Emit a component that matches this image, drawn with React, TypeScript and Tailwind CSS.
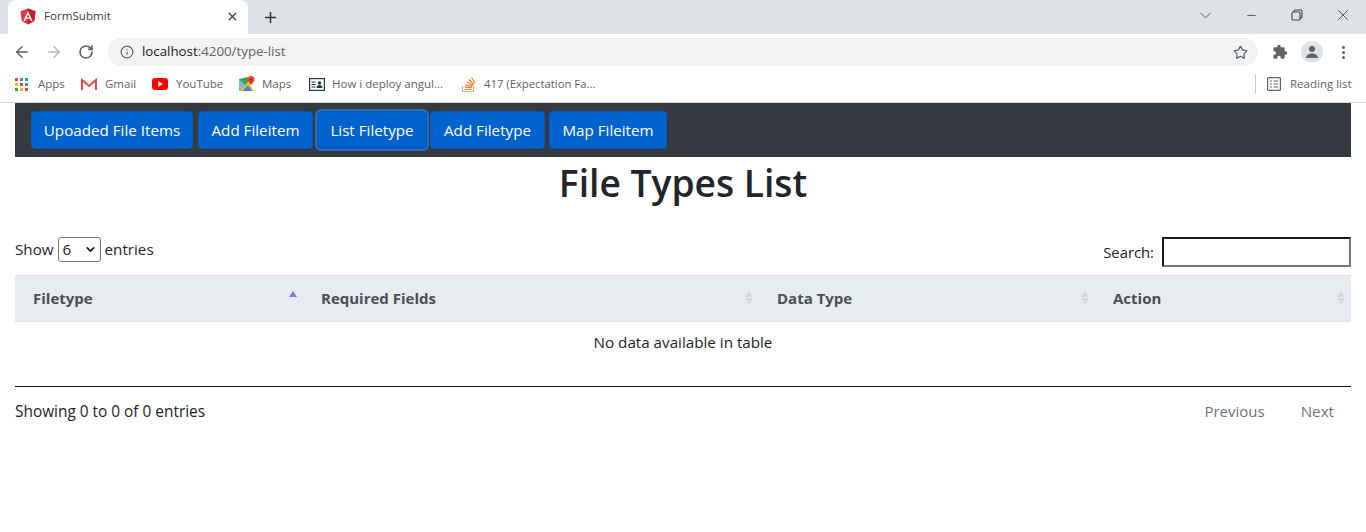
import { ArrowLeft, ArrowRight, ChevronDown, Info, Minus, Plus, RotateCw, Star, X } from 'lucide-react';

const ui = "font-['Open_Sans','Noto_Sans',sans-serif]";

export default function App() {
  return (
    <div className={`h-[532px] w-[1366px] overflow-hidden bg-white ${ui}`}>
      <TabBar />
      <Toolbar />
      <Bookmarks />
      <div className="px-[15px]">
        <NavBar />
        <h1 className="h-[52px] text-center text-[37.2px] leading-[52px] font-semibold text-[#212529]">File Types List</h1>
        <TableControls />
        <FileTable />
        <TableFooter />
      </div>
    </div>
  );
}

function TabBar() {
  return (
    <div className="flex h-[34px] bg-[#dee1e6] pl-2">
      <div className="flex h-[34px] w-[240px] items-center rounded-t-lg bg-white pr-[9px] pb-[2px] pl-3">
        <AngularLogo />
        <span className="ml-2 flex-1 text-[11.6px] text-[#3c4043]">FormSubmit</span>
        <X size={13} strokeWidth={2.6} className="text-[#45484c]" />
      </div>
      <Plus size={17} strokeWidth={2.2} className="mt-[9px] ml-[14px] text-[#35373a]" />
      <div className="ml-auto flex h-[30px] items-center text-[#3c4043]">
        <WindowButton><ChevronDown size={19} strokeWidth={1.1} /></WindowButton>
        <WindowButton><Minus size={13} strokeWidth={1.5} /></WindowButton>
        <WindowButton><RestoreIcon /></WindowButton>
        <WindowButton><X size={18} strokeWidth={1.1} /></WindowButton>
      </div>
    </div>
  );
}

function WindowButton({ children }: { children: React.ReactNode }) {
  return <div className="flex h-[30px] w-[46px] items-center justify-center">{children}</div>;
}

function Toolbar() {
  return (
    <div className="flex h-[34px] items-center bg-white pt-[2px] pl-[13px]">
      <ArrowLeft size={18} strokeWidth={2} className="text-[#5f6368]" />
      <ArrowRight size={18} strokeWidth={2} className="ml-[14px] text-[#b4b6b9]" />
      <RotateCw size={16} strokeWidth={2.4} className="ml-[15px] text-[#5f6368]" />
      <div className="ml-[14px] flex h-7 w-[1150px] items-center rounded-full bg-[#f1f3f4] pr-[10px] pl-[12px]">
        <Info size={14} strokeWidth={2} className="text-[#5f6368]" />
        <span className="ml-[8px] flex-1 text-[13.3px] text-[#5f6368]">
          <span className="text-[#202124]">localhost</span>:4200/type-list
        </span>
        <Star size={15} strokeWidth={2} className="text-[#5f6368]" />
      </div>
      <PuzzleIcon />
      <div className="ml-[13px] flex h-[22px] w-[22px] items-center justify-center rounded-full bg-[#dee1e6]">
        <AvatarIcon />
      </div>
      <div className="ml-[19px] flex flex-col gap-[2px]">
        <span className="h-[3px] w-[3px] rounded-full bg-[#5f6368]" />
        <span className="h-[3px] w-[3px] rounded-full bg-[#5f6368]" />
        <span className="h-[3px] w-[3px] rounded-full bg-[#5f6368]" />
      </div>
    </div>
  );
}

function Bookmarks() {
  return (
    <div className="flex h-[35px] items-center border-b border-[#d4d5d7] bg-white pb-[2px] pl-[15px] text-[11.5px] text-[#5f6368]">
      <AppsIcon />
      <span className="ml-[10px] w-[43px]">Apps</span>
      <GmailIcon />
      <span className="ml-[8px] w-[47px]">Gmail</span>
      <YoutubeIcon />
      <span className="ml-[8px] w-[63px]">YouTube</span>
      <MapsIcon />
      <span className="ml-[7px] w-[47px]">Maps</span>
      <CardIcon />
      <span className="ml-[7px] w-[129px]">How i deploy angul...</span>
      <StackIcon />
      <span className="ml-[8px] text-[11.3px]">417 (Expectation Fa...</span>
      <div className="ml-auto flex h-5 items-center border-l border-[#c9cbce] pr-[15px] pl-[11px]">
        <ReadingIcon />
        <span className="ml-[9px] w-[61px] whitespace-nowrap">Reading list</span>
      </div>
    </div>
  );
}

function NavBar() {
  return (
    <div className="flex h-[54px] items-center bg-[#343a40] pl-4">
      <NavButton label="Upoaded File Items" className="w-[162px]" />
      <NavButton label="Add Fileitem" className="ml-[5px] w-[115px]" />
      <NavButton label="List Filetype" className="ml-1 w-[110px] shadow-[0_0_0_2px_rgba(38,143,255,0.6)]" />
      <NavButton label="Add Filetype" className="ml-[3px] w-[115px]" />
      <NavButton label="Map Fileitem" className="ml-1 w-[118px]" />
    </div>
  );
}

function NavButton({ label, className }: { label: string; className: string }) {
  return (
    <button className={`h-[38px] rounded-[4px] border border-[#005cbf] bg-[#0062cc] text-[15.2px] text-white ${className}`}>{label}</button>
  );
}

function TableControls() {
  return (
    <div className="mt-[28px] flex h-[38px] items-start justify-between text-[15.2px] text-[#212529]">
      <div className="flex items-center">
        <span>Show</span>
        <div className="mx-1 flex h-[25px] w-[43px] items-center justify-between rounded-[3px] border border-[#767676] pr-[3px] pl-[4px]">
          <span>6</span>
          <ChevronDown size={13} strokeWidth={3.4} className="text-[#222]" />
        </div>
        <span>entries</span>
      </div>
      <div className="flex items-center">
        <span className="text-[14.8px]">Search:</span>
        <input className="ml-2 h-[30px] w-[189px] border-2 border-t-[#1a1a1a] border-r-[#767676] border-b-[#767676] border-l-[#1a1a1a] bg-white" />
      </div>
    </div>
  );
}

function FileTable() {
  return (
    <div>
      <div className="flex h-[47px] items-center border-y border-[#dee2e6] bg-[#e9ecef] text-[15px] font-bold text-[#495057]">
        <HeaderCell label="Filetype" width="w-[288px]" active />
        <HeaderCell label="Required Fields" width="w-[456px]" />
        <HeaderCell label="Data Type" width="w-[336px]" />
        <HeaderCell label="Action" width="w-[256px]" />
      </div>
      <div className="flex h-[65px] items-start justify-center border-b border-[#111] pt-[9px] text-[15.2px] text-[#212529]">
        No data available in table
      </div>
    </div>
  );
}

function HeaderCell({ label, width, active }: { label: string; width: string; active?: boolean }) {
  return (
    <div className={`relative flex h-full items-center pl-[18px] ${width}`}>
      {label}
      <div className="absolute top-[15px] right-[6px] flex flex-col gap-[1px]">
        <span className={`h-0 w-0 border-x-[4px] border-b-[6px] border-x-transparent ${active ? 'border-b-[#7c7cdc]' : 'border-b-[#d5d9de]'}`} />
        {!active && <span className="h-0 w-0 border-x-[4px] border-t-[6px] border-x-transparent border-t-[#d5d9de]" />}
      </div>
    </div>
  );
}

function TableFooter() {
  return (
    <div className="mt-[13px] flex items-center justify-between text-[15.2px] text-[#212529]">
      <span className="text-[15.4px]">Showing 0 to 0 of 0 entries</span>
      <div className="flex gap-[36px] pr-[17px] text-[#6c757d]">
        <span className="text-[15px]">Previous</span>
        <span>Next</span>
      </div>
    </div>
  );
}

function AngularLogo() {
  return (
    <svg width="16" height="17" viewBox="0 0 16 17">
      <path d="M8 0.5 L15.5 3.2 L14.3 13 L8 16.5 L1.7 13 L0.5 3.2Z" fill="#dd3a4a" />
      <path d="M8 0.5 L15.5 3.2 L14.3 13 L8 16.5Z" fill="#c3202f" />
      <path d="M8 3 L3.4 13 H5.1 L6 10.8 H10 L10.9 13 H12.6 Z M8 6.5 L9.4 9.5 H6.6Z" fill="#fff" fillRule="evenodd" />
    </svg>
  );
}

function RestoreIcon() {
  return (
    <svg width="12" height="12" viewBox="0 0 12 12" fill="none" stroke="currentColor" strokeWidth="1.1">
      <rect x="1" y="3" width="8" height="8" rx="1" />
      <path d="M3 3V2a1 1 0 0 1 1-1h6a1 1 0 0 1 1 1v6a1 1 0 0 1-1 1H9" />
    </svg>
  );
}

function PuzzleIcon() {
  return (
    <svg width="16" height="16" viewBox="0 0 24 24" className="ml-[14px] text-[#5f6368]" fill="currentColor">
      <path d="M20.5 11H19V7a2 2 0 0 0-2-2h-4V3.5a2.5 2.5 0 0 0-5 0V5H4a2 2 0 0 0-2 2v3.8h1.5a2.7 2.7 0 0 1 0 5.4H2V20a2 2 0 0 0 2 2h3.8v-1.5a2.7 2.7 0 0 1 5.4 0V22H17a2 2 0 0 0 2-2v-4h1.5a2.5 2.5 0 0 0 0-5z" />
    </svg>
  );
}

function AvatarIcon() {
  return (
    <svg width="16" height="16" viewBox="0 0 16 16" fill="#5f6368">
      <circle cx="8" cy="5" r="3" />
      <path d="M2 13.5c0-2.500 3.500-4 6-4s6 1.500 6 4V14H2z" />
    </svg>
  );
}

function AppsIcon() {
  const colors = ['#ea4335', '#4285f4', '#34a853', '#fbbc05', '#ea4335', '#4285f4', '#34a853', '#fbbc05', '#ea4335'];
  return (
    <div className="grid w-[13px] grid-cols-3 gap-[2px]">
      {colors.map((c, i) => (
        <span key={i} className="h-[3px] w-[3px]" style={{ backgroundColor: c }} />
      ))}
    </div>
  );
}

function GmailIcon() {
  return (
    <svg width="16" height="13" viewBox="0 0 16 13" fill="none">
      <path d="M1 12V2l7 6 7-6v10" stroke="#d9534a" strokeWidth="2" />
      <path d="M3 2l5 4.500L13 2" stroke="#e8a9a4" strokeWidth="1" />
    </svg>
  );
}

function YoutubeIcon() {
  return (
    <svg width="16" height="12" viewBox="0 0 16 12">
      <rect width="16" height="12" rx="3" fill="#f00" />
      <path d="M6.300 3.300v5.400L11 6z" fill="#fff" />
    </svg>
  );
}

function MapsIcon() {
  return (
    <svg width="16" height="16" viewBox="0 0 16 16">
      <path d="M0 3l9-2v14l-9 0z" fill="#34a853" />
      <path d="M0 15L9 6l6 9z" fill="#fbbc05" />
      <path d="M3 15L9 9l4 6z" fill="#4285f4" />
      <path d="M0 3l6 6-6 6z" fill="#7fb6f5" />
      <path d="M12 0a3.500 3.500 0 0 1 3.500 3.500C15.500 6 12 9 12 9S8.500 6 8.500 3.500A3.500 3.500 0 0 1 12 0z" fill="#ea4335" />
      <circle cx="12" cy="3.500" r="1.200" fill="#a52714" />
    </svg>
  );
}

function CardIcon() {
  return (
    <svg width="16" height="13" viewBox="0 0 16 13" fill="none">
      <rect x="0.600" y="0.600" width="14.800" height="11.800" fill="#fff" stroke="#22384f" strokeWidth="1.200" />
      <path d="M2.500 4h4M2.500 6.500h4M2.500 9h4" stroke="#22384f" />
      <circle cx="10.500" cy="5" r="1.800" fill="#22384f" />
      <path d="M7.500 10c0-2 1.500-3 3-3s3 1 3 3z" fill="#22384f" />
    </svg>
  );
}

function StackIcon() {
  return (
    <svg width="15" height="17" viewBox="0 0 15 17" fill="none">
      <path d="M1.500 10v5.500h11V10" stroke="#bcbbbb" strokeWidth="1.200" />
      <path d="M3.500 13.500h7M3.800 11.200l7 .7M4.500 8.800l6.800 1.800M5.800 6l6.200 3.400M8 3.500l5 5M10.500 1.500l3.500 5.500" stroke="#f48024" strokeWidth="1.200" />
    </svg>
  );
}

function ReadingIcon() {
  return (
    <svg width="14" height="14" viewBox="0 0 14 14" fill="none" stroke="#5f6368" strokeWidth="1.200">
      <rect x="0.600" y="0.600" width="12.800" height="12.800" rx="1" />
      <path d="M3 4h2M3 7h2M3 10h2M6.500 4H11M6.500 7H11M6.500 10H11" />
    </svg>
  );
}
